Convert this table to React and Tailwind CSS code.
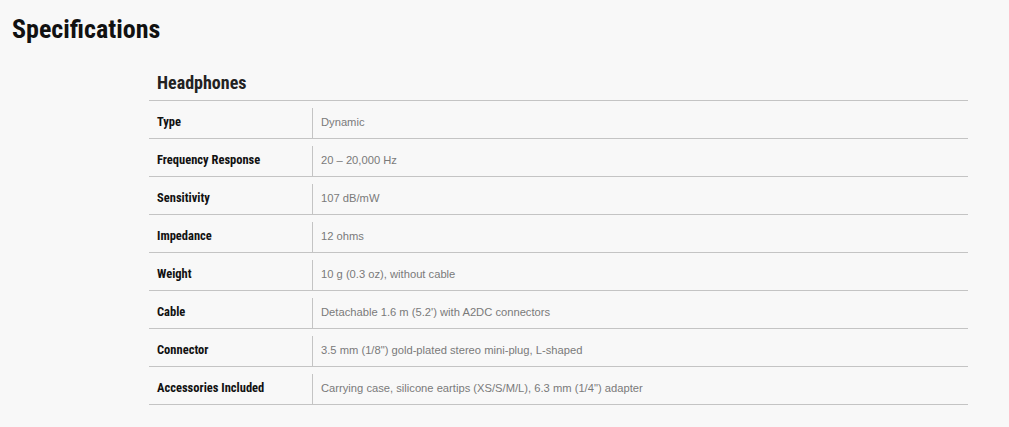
export default function App() {
  const rows = [
    ["Type", "Dynamic"],
    ["Frequency Response", "20 – 20,000 Hz"],
    ["Sensitivity", "107 dB/mW"],
    ["Impedance", "12 ohms"],
    ["Weight", "10 g (0.3 oz), without cable"],
    ["Cable", "Detachable 1.6 m (5.2') with A2DC connectors"],
    ["Connector", "3.5 mm (1/8\") gold-plated stereo mini-plug, L-shaped"],
    ["Accessories Included", "Carrying case, silicone eartips (XS/S/M/L), 6.3 mm (1/4\") adapter"],
  ];
  return (
    <div className="w-[1009px] h-[427px] bg-[#f8f8f8] overflow-hidden">
      <h1 className="pl-[12px] pt-[13px] text-[26px] leading-[32px] font-bold font-stretch-condensed text-[#111] font-['Roboto',sans-serif]">
        Specifications
      </h1>
      <div className="ml-[149px] w-[819px] mt-[28px]">
        <div className="h-[28px] pl-[8px] border-b border-[#c4c4c4]">
          <h2 className="text-[18px] leading-[20px] font-bold font-stretch-condensed text-[#222] font-['Roboto',sans-serif]">Headphones</h2>
        </div>
        {rows.map(([k, v]) => (
          <div key={k} className="flex h-[38px] pt-[7px] border-b border-[#c4c4c4]">
            <div className="w-[163px] pl-[8px] pb-[2px] flex items-center text-[12.5px] font-bold font-stretch-condensed text-[#111] font-['Roboto',sans-serif]">
              {k}
            </div>
            <div className="flex-1 border-l border-[#c4c4c4] pl-[8px] pb-[2px] flex items-center text-[11.2px] text-[#7a7a7a] font-['Liberation_Sans',Arial,sans-serif]">
              {v}
            </div>
          </div>
        ))}
      </div>
    </div>
  );
}
